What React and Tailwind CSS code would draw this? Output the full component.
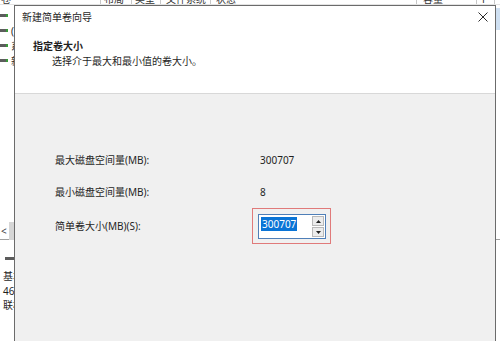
export default function App() {
  return (
    <div className="relative w-[500px] h-[341px] overflow-hidden bg-white text-[10px] leading-[12px] text-[#1f1f1f] font-[Noto_Sans,Noto_Sans_CJK_SC,sans-serif]">
      {/* background: disk management window */}
      <div className="flex flex-col">
        <div className="flex h-[5px] overflow-hidden border-b border-[#e3e3e3] text-[#333]">
          <div className="w-[101px] shrink-0 border-r border-[#c8c8c8] pl-[1px] -mt-[7px]">卷</div>
          <div className="w-[31px] shrink-0 border-r border-[#c8c8c8] pl-[3px] -mt-[7px]">布局</div>
          <div className="w-[29px] shrink-0 border-r border-[#c8c8c8] pl-[3px] -mt-[7px]">类型</div>
          <div className="w-[50px] shrink-0 border-r border-[#c8c8c8] pl-[5px] -mt-[7px]">文件系统</div>
          <div className="w-[206px] shrink-0 border-r border-[#c8c8c8] pl-[5px] -mt-[7px]">状态</div>
          <div className="w-[60px] shrink-0 border-r border-[#c8c8c8] pl-[6px] -mt-[7px]">容量</div>
          <div className="w-[18px] shrink-0 border-r border-[#c8c8c8] pl-[5px] -mt-[7px]">F</div>
        </div>
        <div className="flex flex-col pt-[3px]">
          {['', '(', '系', '新'].map((c, i) => (
            <div key={i} className="flex items-center h-[15px] gap-[3px]">
              <span className="w-[8px] h-[3px] bg-[#5c5c5c] border-r-2 border-[#3a9a3a]" />
              <span>{c}</span>
            </div>
          ))}
        </div>
        <div className="mt-[154px] flex items-center h-[18px] border-b border-[#a0a0a0]">
          <span className="w-[9px] pl-[1px] text-[#444]">&lt;</span>
          <span className="w-[6px] h-[18px] bg-[#d6d6d6]" />
        </div>
        <div className="flex flex-col pt-[17px] pl-[3px]">
          <span className="w-[10px] h-[3px] bg-[#5c5c5c] ml-[2px] mb-[9px]" />
          <span className="h-[15px] leading-[15px]">基本</span>
          <span className="h-[14px] leading-[14px]">46</span>
          <span className="h-[14px] leading-[14px]">联机</span>
        </div>
      </div>
      <div className="absolute right-0 top-[8px] w-[5px] h-[22px] bg-[#cfe0f2]" />

      {/* wizard dialog */}
      <div className="absolute left-[14px] top-[5px] w-[482px] h-[360px] border border-[#6b6b6b] bg-[#f0f0f0] flex flex-col">
        <div className="relative h-[88px] shrink-0 bg-white border-b border-[#d8d8d8] flex flex-col">
          <div className="mt-[5px] ml-[7px]">新建简单卷向导</div>
          <svg className="absolute right-[7px] top-[6px]" width="10" height="10" viewBox="0 0 10 10">
            <path d="M0.5 0.5 L9.5 9.5 M9.5 0.5 L0.5 9.5" stroke="#2b2b2b" strokeWidth="1" fill="none" />
          </svg>
          <div className="mt-[17px] ml-[18px] font-bold">指定卷大小</div>
          <div className="mt-[3px] ml-[37px]">选择介于最大和最小值的卷大小。</div>
        </div>
        <div className="flex flex-col pt-[50px] pl-[40px]">
          <div className="flex items-center h-[32px]">
            <span className="w-[205px]">最大磁盘空间量(MB):</span>
            <span>300707</span>
          </div>
          <div className="flex items-center h-[32px]">
            <span className="w-[205px]">最小磁盘空间量(MB):</span>
            <span>8</span>
          </div>
          <div className="flex items-center h-[36px]">
            <span className="w-[197px] shrink-0">简单卷大小(MB)(S):</span>
            <div className="h-[36px] w-[79px] shrink-0 border border-[#e07a7a] pt-[5px] pl-[5px]">
              <div className="flex h-[25px] w-[68px] border border-[#4f7fb8] bg-white">
                <div className="flex-1 pl-[2px] pt-[2px]">
                  <span className="inline-block bg-[#0a74d6] text-white leading-[14px] px-[1px]">300707</span>
                </div>
                <div className="flex flex-col w-[13px] py-[1px] pr-[1px] gap-[1px]">
                  <div className="flex-1 flex items-center justify-center bg-[#ececec] border border-[#b9b9b9]">
                    <svg width="5" height="3" viewBox="0 0 5 3"><path d="M0 3 L2.5 0 L5 3 Z" fill="#222" /></svg>
                  </div>
                  <div className="flex-1 flex items-center justify-center bg-[#ececec] border border-[#b9b9b9]">
                    <svg width="5" height="3" viewBox="0 0 5 3"><path d="M0 0 L2.5 3 L5 0 Z" fill="#222" /></svg>
                  </div>
                </div>
              </div>
            </div>
          </div>
        </div>
      </div>
    </div>
  );
}
